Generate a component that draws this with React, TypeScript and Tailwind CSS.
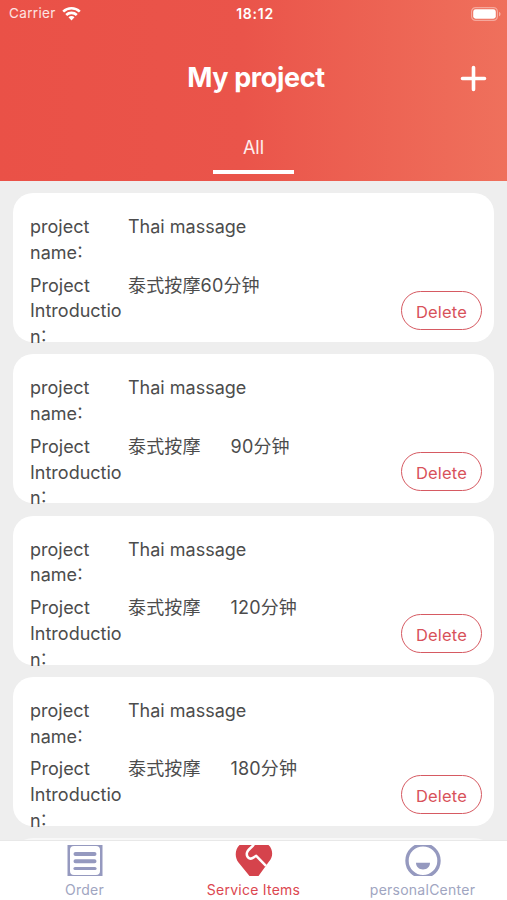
const projects = [
  { id: 1, name: 'Thai massage', intro: ['泰式按摩60分钟'] },
  { id: 2, name: 'Thai massage', intro: ['泰式按摩', '90分钟'] },
  { id: 3, name: 'Thai massage', intro: ['泰式按摩', '120分钟'] },
  { id: 4, name: 'Thai massage', intro: ['泰式按摩', '180分钟'] },
];

function StatusBar() {
  return (
    <div className="grid grid-cols-[1fr_auto_1fr] items-center h-[27px] pl-[9px] pr-[6px]">
      <div className="flex items-center gap-[6px]">
        <span className="text-[13.5px] leading-[27px] tracking-[0.35px] text-white/85">Carrier</span>
        <svg className="w-[19px] h-[15px]" viewBox="0 0 19 15" fill="none" stroke="#fff" strokeWidth="2.6">
          <path d="M1.2 5.6a12 12 0 0 1 16.6 0" />
          <path d="M4.2 9a7.7 7.7 0 0 1 10.6 0" />
          <path d="M9.5 14.4l-3-3.1a4.2 4.2 0 0 1 6 0z" fill="#fff" stroke="none" />
        </svg>
      </div>
      <div className="text-center text-[14px] font-semibold tracking-[0.75px]">18:12</div>
      <svg className="w-[30px] h-[14px] justify-self-end" viewBox="0 0 30 14">
        <rect x="0.6" y="0.6" width="25.8" height="12.8" rx="4" fill="none" stroke="#fff" strokeOpacity="0.4" strokeWidth="1.2" />
        <rect x="2.2" y="2.3" width="22.6" height="9.4" rx="2.4" fill="#fff" />
        <path d="M28 4.7v4.6c2-.8 2-3.8 0-4.6z" fill="#fff" fillOpacity="0.45" />
      </svg>
    </div>
  );
}

function Colon() {
  return <span className="-ml-px align-[2px] text-[16px] leading-none">：</span>;
}

function ProjectCard({ name, intro }: { name: string; intro: string[] }) {
  return (
    <div className="flex h-[149px] shrink-0 rounded-[20px] bg-white pl-[17px] pr-[12px] pt-[21px] text-[18px] leading-[25.8px] text-[#4c4c4c]">
      <div className="w-[98px] shrink-0">
        <div className="h-[51.6px]">project<br />name<Colon /></div>
        <div className="mt-[7px]">Project<br />Introductio<br />n<Colon /></div>
      </div>
      <div className="flex-1">
        <div className="h-[51.6px]">{name}</div>
        <div className="mt-[7px] flex gap-[30px] tracking-[0.15px] whitespace-nowrap">
          {intro.map((part) => (
            <span key={part}>{part}</span>
          ))}
        </div>
      </div>
      <button className="mb-[12px] h-[39px] w-[81px] self-end rounded-full border-[1.5px] border-[#d65a62] pt-px text-[16.5px] leading-[38px] tracking-[0.15px] text-[#d8525a]">
        Delete
      </button>
    </div>
  );
}

function OrderIcon() {
  return (
    <svg className="w-[36px] h-[31px]" viewBox="0 0 36 31">
      <path fill="#9599bf" fillRule="evenodd" d="M0.5 0h35v31h-35zM7 0.9Q3 0.9 3 5v21Q3 30.1 7 30.1h22q4 0 4-4.1V5q0-4.1-4-4.1z" />
      <path d="M8.5 9h19M8.5 16.3h19" stroke="#9599bf" strokeWidth="4" strokeLinecap="round" />
      <path d="M8 23.5h20" stroke="#9599bf" strokeWidth="3.2" strokeLinecap="round" />
    </svg>
  );
}

function ServiceIcon() {
  return (
    <svg className="w-[38px] h-[31px]" viewBox="0 0 38 31">
      <path fill="#d5434c" d="M4.5 0h29c4.8 4.5 4.8 12 .5 16.500L23.500 31h-9L3.500 17.500C-.5 12.500-.2 4.500 4.500 0z" />
      <path d="M19 -1c-1 3-7 5.500-7.200 9.500-.3 4.500 3.700 6.500 6.700 4l2.700-1.700 9.800 10" fill="none" stroke="#fff" strokeWidth="2.500" strokeLinejoin="round" />
    </svg>
  );
}

function PersonIcon() {
  return (
    <svg className="w-[36px] h-[31px]" viewBox="0 0 36 31">
      <circle cx="18" cy="15.700" r="16" fill="none" stroke="#9599bf" strokeWidth="3.400" />
      <path d="M11 17.800h14c0 4-3 6.700-7 6.700s-7-2.700-7-6.700z" fill="#9599bf" />
    </svg>
  );
}

const tabs = [
  { label: 'Order', Icon: OrderIcon, active: false },
  { label: 'Service Items', Icon: ServiceIcon, active: true },
  { label: 'personalCenter', Icon: PersonIcon, active: false },
];

export default function App() {
  return (
    <div className="flex h-[900px] w-[507px] flex-col overflow-hidden bg-[#eee] font-['Inter','Noto_Sans_CJK_SC',sans-serif]">
      <header className="h-[180.5px] shrink-0 bg-linear-to-r from-[#ea5147] from-0% via-[#ea544a] via-48% to-[#ef705c] text-white">
        <StatusBar />
        <div className="grid grid-cols-[1fr_auto_1fr] items-center h-[103px] px-[20px]">
          <h1 className="col-start-2 ml-[5px] text-[27px] font-bold tracking-[-0.35px]">My project</h1>
          <svg className="w-[27px] h-[27px] justify-self-end" viewBox="0 0 27 27" stroke="#fff" strokeWidth="3.6" strokeLinecap="round">
            <path d="M13.5 2.500v22M2.500 13.500h22" />
          </svg>
        </div>
        <div className="mx-auto flex h-[43.500px] w-[81px] flex-col items-center border-b-4 border-white pt-[3px] text-[18px] leading-[29px] text-white/90">
          All
        </div>
      </header>

      <main className="flex flex-1 flex-col gap-[12.300px] overflow-hidden px-[13px] pt-[12.500px]">
        {projects.map((p) => (
          <ProjectCard key={p.id} name={p.name} intro={p.intro} />
        ))}
        <div className="h-[149px] shrink-0 rounded-[20px] bg-[#f8f8f8]" />
      </main>

      <nav className="grid h-[60px] shrink-0 grid-cols-3 border-t border-[#e8e8e8] bg-white">
        {tabs.map(({ label, Icon, active }) => (
          <div key={label} className="flex flex-col items-center pt-[4px]">
            <Icon />
            <span className={`mt-[4px] text-[14px] leading-[20px] tracking-[0.25px] ${active ? 'text-[#dc4750]' : 'text-[#a0a5c1]'}`}>
              {label}
            </span>
          </div>
        ))}
      </nav>
    </div>
  );
}
